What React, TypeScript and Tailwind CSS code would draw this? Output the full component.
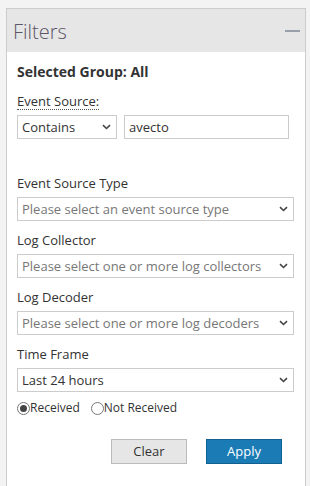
import React from "react";

const font = { fontFamily: '"Open Sans", "Noto Sans", Arial, sans-serif' };

function Chevron() {
  return (
    <svg width="9" height="6" viewBox="0 0 9 6" className="shrink-0">
      <path d="M1 1.2l3.5 3.3 3.5-3.3" fill="none" stroke="#444" strokeWidth="1.6" />
    </svg>
  );
}

function Select({ text, placeholder, className = "" }: { text: string; placeholder?: boolean; className?: string }) {
  return (
    <div
      className={`h-[24px] border border-[#ccc] bg-white flex items-center justify-between pl-[4px] pr-[5px] ${className}`}
    >
      <span className={`text-[13px] leading-[22px] whitespace-nowrap ${placeholder ? "text-[#777]" : "text-[#333]"}`}>{text}</span>
      <Chevron />
    </div>
  );
}

function Group({ label, text, placeholder }: { label: string; text: string; placeholder?: boolean }) {
  return (
    <div className="mt-[10px]">
      <div className="text-[13px] leading-[18px] text-[#333]">{label}</div>
      <Select text={text} placeholder={placeholder} className="mt-[5px] w-[277px]" />
    </div>
  );
}

function Radio({ checked, label }: { checked?: boolean; label: string }) {
  return (
    <div className="flex items-center">
      <div className="w-[13px] h-[13px] rounded-full border border-[#777] bg-white flex items-center justify-center">
        {checked && <div className="w-[7px] h-[7px] rounded-full bg-[#444]" />}
      </div>
      <span className="text-[12px] leading-[18px] text-[#333]">{label}</span>
    </div>
  );
}

export default function App() {
  return (
    <div className="w-[310px] h-[486px] overflow-hidden bg-[#f3f3f3] pt-[8px] pl-[6px]" style={font}>
      <div className="w-[300px] h-[520px] border border-[#ccc] bg-white">
        <div className="h-[43px] bg-[#e6e6e6] flex items-center justify-between pl-[6px] pr-[5px]">
          <span className="text-[20px] leading-[28px] font-light text-[#5b5566] mt-[3px]">Filters</span>
          <div className="w-[15px] h-[2px] bg-[#9aa0aa]" />
        </div>
        <div className="pl-[10px] pr-[11px] pt-[10px]">
          <div className="text-[14px] leading-[20px] font-bold text-[#333]">Selected Group: All</div>
          <div className="mt-[12px] flex">
            <span className="block text-[13px] leading-[15px] text-[#333] border-b border-dotted border-[#555]">
              Event Source:
            </span>
          </div>
          <div className="flex mt-[5px] gap-[7px]">
            <Select text="Contains" className="w-[100px]" />
            <div className="w-[165px] h-[24px] border border-[#ccc] bg-white flex items-center pl-[4px]">
              <span className="text-[13px] leading-[22px] text-[#333]">avecto</span>
            </div>
          </div>
          <div className="mt-[35px]">
            <Group label="Event Source Type" text="Please select an event source type" placeholder />
            <Group label="Log Collector" text="Please select one or more log collectors" placeholder />
            <Group label="Log Decoder" text="Please select one or more log decoders" placeholder />
            <Group label="Time Frame" text="Last 24 hours" />
          </div>
          <div className="mt-[7px] flex gap-[11px]">
            <Radio checked label="Received" />
            <Radio label="Not Received" />
          </div>
          <div className="mt-[22px] flex gap-[19px] pl-[94px]">
            <button className="w-[76px] h-[25px] border border-[#bbb] bg-[#e6e6e6] text-[13px] text-[#333] flex items-center justify-center">
              Clear
            </button>
            <button className="w-[76px] h-[25px] border border-[#12608f] bg-[#1a7bb5] text-[13px] text-white flex items-center justify-center">
              Apply
            </button>
          </div>
        </div>
      </div>
    </div>
  );
}
